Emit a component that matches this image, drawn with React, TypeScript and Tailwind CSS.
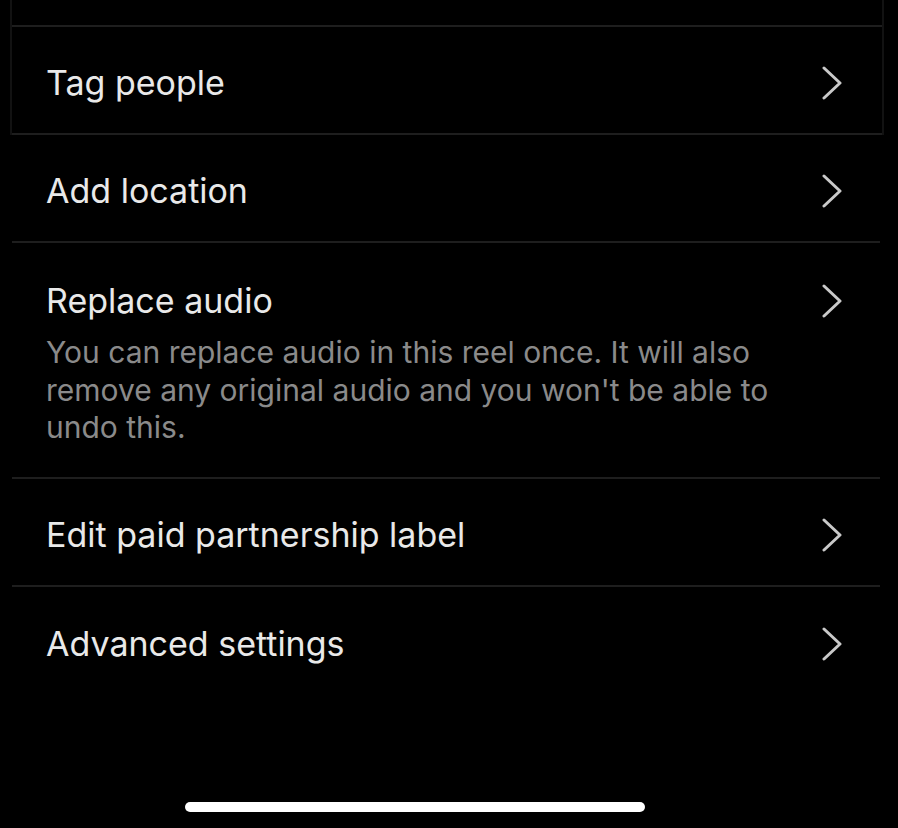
interface RowProps {
  title: string;
  note?: string;
  last?: boolean;
  pr?: string;
}

const Chevron = () => (
  <svg width="22" height="34" viewBox="0 0 22 34" fill="none" className="shrink-0">
    <path d="M3 2 L19 17 L3 32" stroke="#c9c9c9" strokeWidth="3" strokeLinecap="round" strokeLinejoin="round" />
  </svg>
);

const Row = ({ title, note, last = false, pr = 'pr-[37px]' }: RowProps) => {
  const border = last ? '' : 'border-b-2 border-[#1e1e1e]';
  if (note) {
    return (
      <div className={`flex flex-col pt-[38px] pb-[30px] ${border}`}>
        <div className={`flex items-center justify-between pl-[34px] ${pr}`}>
          <span className="text-[34px] leading-[40px] text-[#e9e9e9]">{title}</span>
          <Chevron />
        </div>
        <p className="mt-[13px] pl-[34px] pr-[80px] text-[30px] leading-[37.5px] text-[#8a8a8a]">{note}</p>
      </div>
    );
  }
  return (
    <div className={`flex h-[108px] items-center justify-between pt-[6px] pl-[34px] ${pr} ${border}`}>
      <span className="text-[34px] leading-[40px] text-[#e9e9e9]">{title}</span>
      <Chevron />
    </div>
  );
};

export default function App() {
  return (
    <div
      className="flex h-[828px] w-[898px] flex-col overflow-hidden bg-black"
      style={{ fontFamily: 'Inter, "Noto Sans", sans-serif' }}
    >
      <div className="ml-[10px] mr-[14px] flex flex-col border-x-2 border-[#121212]">
        <div className="h-[27px] border-b-2 border-[#1e1e1e]" />
        <Row title="Tag people" pr="pr-[39px]" />
      </div>
      <div className="ml-[12px] mr-[18px] flex flex-col">
        <Row title="Add location" />
        <Row
          title="Replace audio"
          note="You can replace audio in this reel once. It will also remove any original audio and you won't be able to undo this."
        />
        <Row title="Edit paid partnership label" />
        <Row title="Advanced settings" last />
      </div>
      <div className="flex-1" />
      <div className="pb-[16px] pl-[185px]">
        <div className="h-[10px] w-[460px] rounded-full bg-white" />
      </div>
    </div>
  );
}
